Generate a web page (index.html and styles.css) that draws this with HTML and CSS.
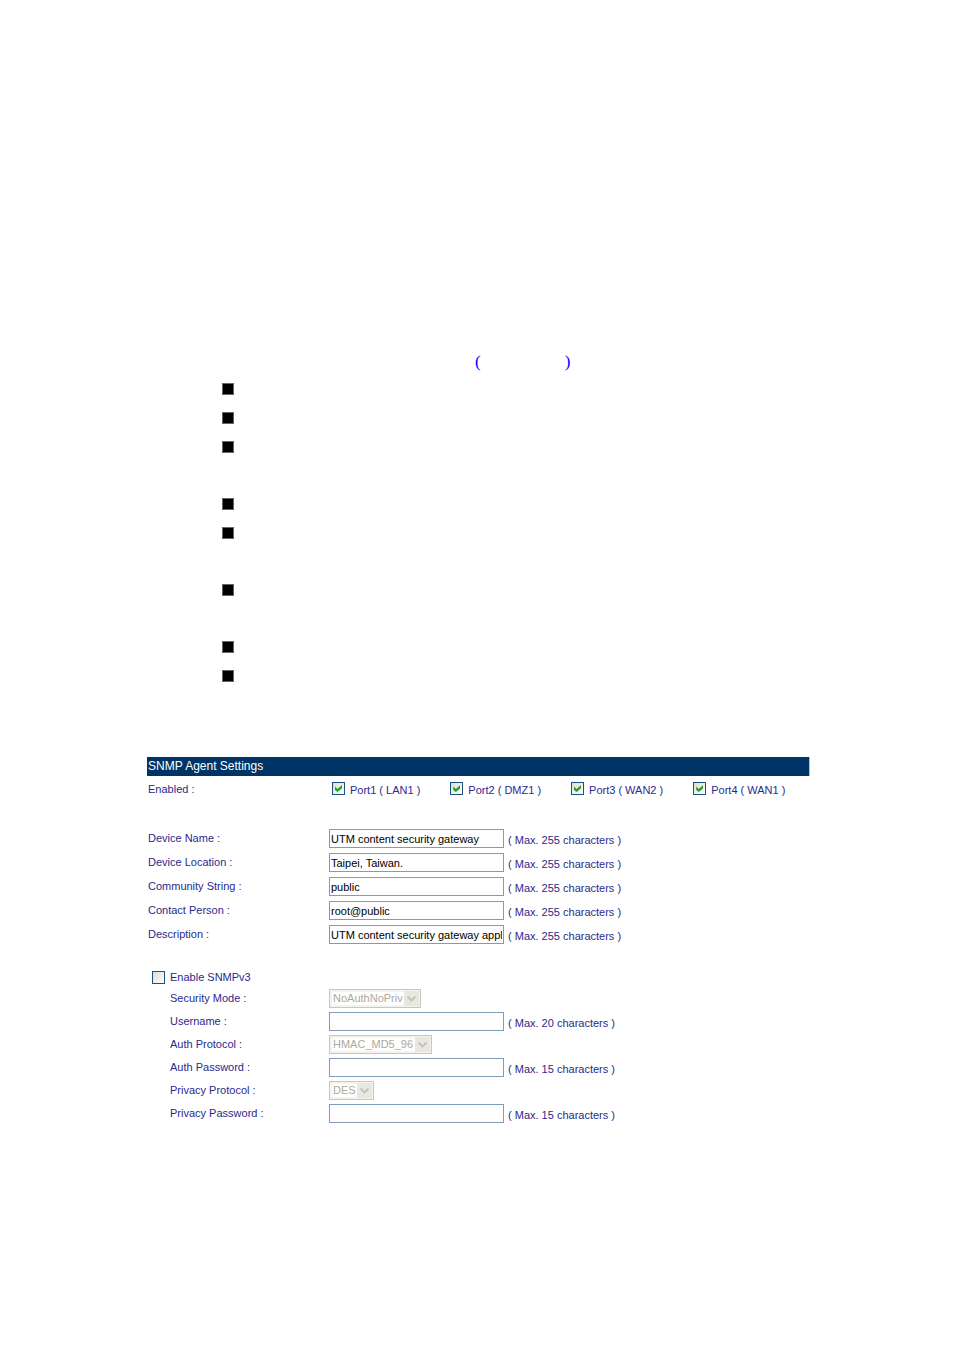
FILE: index.html
```html
<!DOCTYPE html>
<html lang="en">
<head>
<meta charset="utf-8">
<title>SNMP Agent Settings</title>
<link rel="stylesheet" href="styles.css">
</head>
<body>
<main class="page">
  <section class="notes">
    <p class="figure-ref"><span>(</span><span>)</span></p>
    <ul class="bullets">
      <li></li>
      <li></li>
      <li class="tall"></li>
      <li></li>
      <li class="tall"></li>
      <li class="tall"></li>
      <li></li>
      <li></li>
    </ul>
  </section>

  <form class="panel">
    <h1 class="panel-title">SNMP Agent Settings</h1>

    <div class="row ports-row">
      <span class="label">Enabled :</span>
      <div class="ports">
        <label class="port"><input class="check" type="checkbox" checked><span>Port1 ( LAN1 )</span></label>
        <label class="port"><input class="check" type="checkbox" checked><span>Port2 ( DMZ1 )</span></label>
        <label class="port"><input class="check" type="checkbox" checked><span>Port3 ( WAN2 )</span></label>
        <label class="port"><input class="check" type="checkbox" checked><span>Port4 ( WAN1 )</span></label>
      </div>
    </div>

    <div class="group device">
      <div class="row"><label class="label" for="name">Device Name :</label><input class="field" id="name" type="text" value="UTM content security gateway"><span class="hint">( Max. 255 characters )</span></div>
      <div class="row"><label class="label" for="location">Device Location :</label><input class="field" id="location" type="text" value="Taipei, Taiwan."><span class="hint">( Max. 255 characters )</span></div>
      <div class="row"><label class="label" for="community">Community String :</label><input class="field" id="community" type="text" value="public"><span class="hint">( Max. 255 characters )</span></div>
      <div class="row"><label class="label" for="contact">Contact Person :</label><input class="field" id="contact" type="text" value="root@public"><span class="hint">( Max. 255 characters )</span></div>
      <div class="row"><label class="label" for="description">Description :</label><input class="field" id="description" type="text" value="UTM content security gateway appliance"><span class="hint">( Max. 255 characters )</span></div>
    </div>

    <label class="enable"><input class="check" type="checkbox"><span>Enable SNMPv3</span></label>

    <div class="group security">
      <div class="row"><label class="label" for="mode">Security Mode :</label><span class="picker"><select id="mode" disabled><option>NoAuthNoPriv</option></select><svg class="arrow" viewBox="0 0 15 15" aria-hidden="true"><path d="M3.5 5.5 7.5 9.5 11.5 5.5"/></svg></span></div>
      <div class="row"><label class="label" for="user">Username :</label><input class="field" id="user" type="text"><span class="hint">( Max. 20 characters )</span></div>
      <div class="row"><label class="label" for="auth">Auth Protocol :</label><span class="picker"><select id="auth" disabled><option>HMAC_MD5_96</option></select><svg class="arrow" viewBox="0 0 15 15" aria-hidden="true"><path d="M3.5 5.5 7.5 9.5 11.5 5.5"/></svg></span></div>
      <div class="row"><label class="label" for="authpass">Auth Password :</label><input class="field" id="authpass" type="password"><span class="hint">( Max. 15 characters )</span></div>
      <div class="row"><label class="label" for="privacy">Privacy Protocol :</label><span class="picker"><select id="privacy" disabled><option>DES</option></select><svg class="arrow" viewBox="0 0 15 15" aria-hidden="true"><path d="M3.5 5.5 7.5 9.5 11.5 5.5"/></svg></span></div>
      <div class="row"><label class="label" for="privpass">Privacy Password :</label><input class="field" id="privpass" type="password"><span class="hint">( Max. 15 characters )</span></div>
    </div>
  </form>
</main>
</body>
</html>
```
FILE: styles.css
```css
*,
*::before {
  box-sizing: border-box;
}

body {
  margin: 0;
  background: #fff;
  color: #2a2a8c;
  font: 11px/13px "Liberation Sans", Arial, sans-serif;
}

.page {
  padding: 352px 144px 80px 147px;
}

.notes {
  padding-left: 75px;
}

.figure-ref {
  display: flex;
  gap: 84px;
  margin: 0 0 11px;
  padding-left: 253px;
  color: #00f;
  font: 17px/20px "Liberation Serif", "Times New Roman", serif;
}

.bullets {
  margin: 0;
  padding: 0;
  list-style: none;
}

.bullets li {
  height: 29px;
}

.bullets .tall {
  height: 57px;
}

.bullets li::before {
  content: "";
  display: block;
  width: 12px;
  height: 12px;
  background: #000;
  border: 1px solid #666;
}

.panel {
  margin-top: 58px;
}

.panel-title {
  margin: 0;
  padding: 0 1px;
  background: #036;
  border-right: 1px solid #b3c2d1;
  color: #fff;
  font-size: 12px;
  font-weight: 400;
  line-height: 19px;
}

.row {
  display: grid;
  grid-template-columns: 181px auto 1fr;
  align-items: center;
  padding-left: 1px;
}

.ports-row {
  margin-top: 6px;
}

.ports {
  display: flex;
  gap: 30px;
  padding-left: 3px;
}

.port {
  display: flex;
  gap: 5px;
}

.port span {
  padding-top: 2px;
}

.check {
  appearance: none;
  width: 13px;
  height: 13px;
  margin: 0;
  border: 1px solid #1c5180;
  background: linear-gradient(135deg, #dcdcd7, #fff);
}

.check:checked::before {
  content: "";
  display: block;
  width: 7px;
  height: 7px;
  margin: 2px;
  background: #21a121;
  clip-path: polygon(0 20%, 36% 56%, 100% 0, 100% 46%, 36% 100%, 0 72%);
}

.group {
  display: grid;
}

.device {
  gap: 5px;
  margin-top: 32px;
}

.field {
  width: 175px;
  height: 19px;
  margin: 0;
  padding: 0 1px;
  border: 1px solid #7f9db9;
  background: #fff;
  color: #000;
  font: inherit;
}

.hint {
  padding: 4px 0 0 4px;
}

.enable {
  display: flex;
  gap: 5px;
  margin: 27px 0 5px 5px;
}

.security {
  gap: 4px;
}

.security .row {
  grid-template-columns: 159px auto 1fr;
  padding-left: 23px;
}

.picker {
  position: relative;
  justify-self: start;
}

.picker select {
  appearance: none;
  display: block;
  height: 19px;
  margin: 0;
  padding: 0 17px 0 3px;
  border: 1px solid #c9c7ba;
  border-radius: 0;
  outline: 2px solid #f5f4ea;
  outline-offset: -3px;
  background: #fff;
  color: #aca899;
  font: inherit;
  opacity: 1;
}

.arrow {
  position: absolute;
  top: 2px;
  right: 2px;
  width: 15px;
  height: 15px;
  background: #e9e8e0;
  fill: none;
  stroke: #c5c4b8;
  stroke-width: 2;
}
```
